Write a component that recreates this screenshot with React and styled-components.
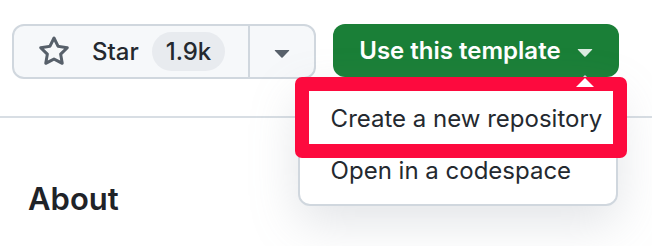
import React from "react";
import styled, { createGlobalStyle } from "styled-components";

const Global = createGlobalStyle`
  html, body { margin: 0; padding: 0; background: #ffffff; }
  body { font-family: Inter, "Noto Sans", "Liberation Sans", sans-serif; -webkit-font-smoothing: antialiased; }
  * { box-sizing: border-box; }
`;

const Page = styled.div`
  width: 652px;
  height: 246px;
  overflow: hidden;
  position: relative;
  display: flex;
  flex-direction: column;
`;

const Toolbar = styled.div`
  display: flex;
  align-items: flex-start;
  gap: 17px;
  padding: 24px 0 0 12px;
`;

const ButtonGroup = styled.div`
  display: flex;
  height: 55px;
  border: 2px solid #d0d7de;
  border-radius: 12px;
  background: #f6f8fa;
  overflow: hidden;
`;

const GroupButton = styled.button`
  display: flex;
  align-items: center;
  height: 100%;
  margin: 0;
  border: none;
  background: transparent;
  color: #24292f;
  font-family: inherit;
  font-size: 24px;
  font-weight: 500;
  padding: ${(p) => p.$pad};
  border-left: ${(p) => (p.$divided ? "2px solid #d0d7de" : "none")};
  cursor: pointer;
`;

const Label = styled.span`
  margin-left: ${(p) => p.$ml || 0}px;
  white-space: nowrap;
`;

const Counter = styled.span`
  display: inline-flex;
  align-items: center;
  justify-content: center;
  height: 39px;
  margin-left: 13px;
  padding: 0 14px;
  border-radius: 20px;
  background: #e8ebef;
  color: #24292f;
  font-size: 24px;
  font-weight: 500;
`;

const TemplateWrap = styled.div`
  position: relative;
`;

const PrimaryButton = styled.button`
  display: flex;
  align-items: center;
  height: 53px;
  margin: 0;
  padding: 0 18px 0 26px;
  border: none;
  border-radius: 12px;
  background: #1a7f37;
  color: #ffffff;
  font-family: inherit;
  font-size: 24px;
  font-weight: 600;
  cursor: pointer;
`;

const Menu = styled.div`
  position: absolute;
  top: 58px;
  right: 1px;
  width: 320px;
  padding: 8px 0;
  background: #ffffff;
  border: 2px solid #d0d7de;
  border-radius: 12px;
  box-shadow: 0 16px 48px rgba(140, 149, 159, 0.25);
  z-index: 2;

  &::before,
  &::after {
    content: "";
    position: absolute;
    right: 22px;
    border: 9px solid transparent;
  }
  &::before {
    top: -18px;
    border-bottom-color: #d0d7de;
  }
  &::after {
    top: -15px;
    border-bottom-color: #ffffff;
  }
`;

const MenuItem = styled.div`
  height: 52px;
  display: flex;
  align-items: center;
  padding: 0 0 0 31px;
  color: #24292f;
  font-size: 24px;
  font-weight: 400;
  white-space: nowrap;
`;

const Highlight = styled.div`
  position: absolute;
  left: -5px;
  top: -7px;
  width: 332px;
  height: 81px;
  border: 14px solid #fd0a3e;
  border-radius: 7px;
  pointer-events: none;
`;

const Divider = styled.hr`
  margin: 37px 0 0;
  border: none;
  border-top: 2px solid #d8dee4;
  width: 100%;
`;

const Heading = styled.h2`
  margin: 61px 0 0 28px;
  font-size: 31px;
  line-height: 40px;
  font-weight: 600;
  color: #1f2328;
`;

const Icon = styled.svg`
  width: 32px;
  height: 32px;
  flex: none;
  fill: ${(p) => p.$color || "#57606a"};
  margin-left: ${(p) => p.$ml || 0}px;
`;

const StarIcon = () => (
  <Icon viewBox="0 0 16 16">
    <path d="M8 .25a.75.75 0 0 1 .673.418l1.882 3.815 4.21.612a.75.75 0 0 1 .416 1.279l-3.046 2.97.719 4.192a.751.751 0 0 1-1.088.791L8 12.347l-3.766 1.98a.75.75 0 0 1-1.088-.79l.72-4.194L.818 6.374a.75.75 0 0 1 .416-1.28l4.21-.611L7.327.668A.75.75 0 0 1 8 .25Zm0 2.445L6.615 5.5a.75.75 0 0 1-.564.41l-3.097.45 2.24 2.184a.75.75 0 0 1 .216.664l-.528 3.084 2.769-1.456a.75.75 0 0 1 .698 0l2.77 1.456-.53-3.084a.75.75 0 0 1 .216-.664l2.24-2.183-3.096-.45a.75.75 0 0 1-.564-.41L8 2.694Z" />
  </Icon>
);

const TriangleDown = ({ color, ml }) => (
  <Icon viewBox="0 0 16 16" $color={color} $ml={ml}>
    <path d="m4.427 7.427 3.396 3.396a.25.25 0 0 0 .354 0l3.396-3.396A.25.25 0 0 0 11.396 7H4.604a.25.25 0 0 0-.177.427Z" />
  </Icon>
);

export default function App() {
  return (
    <>
      <Global />
      <Page>
        <Toolbar>
          <ButtonGroup>
            <GroupButton $pad="0 23px 0 24px">
              <StarIcon />
              <Label $ml={22}>Star</Label>
              <Counter>1.9k</Counter>
            </GroupButton>
            <GroupButton $pad="0 16px 0 16px" $divided>
              <TriangleDown color="#57606a" />
            </GroupButton>
          </ButtonGroup>
          <TemplateWrap>
            <PrimaryButton>
              <Label>Use this template</Label>
              <TriangleDown color="rgba(255,255,255,0.85)" ml={8} />
            </PrimaryButton>
            <Menu>
              <MenuItem>Create a new repository</MenuItem>
              <MenuItem>Open in a codespace</MenuItem>
              <Highlight />
            </Menu>
          </TemplateWrap>
        </Toolbar>
        <Divider />
        <Heading>About</Heading>
      </Page>
    </>
  );
}
